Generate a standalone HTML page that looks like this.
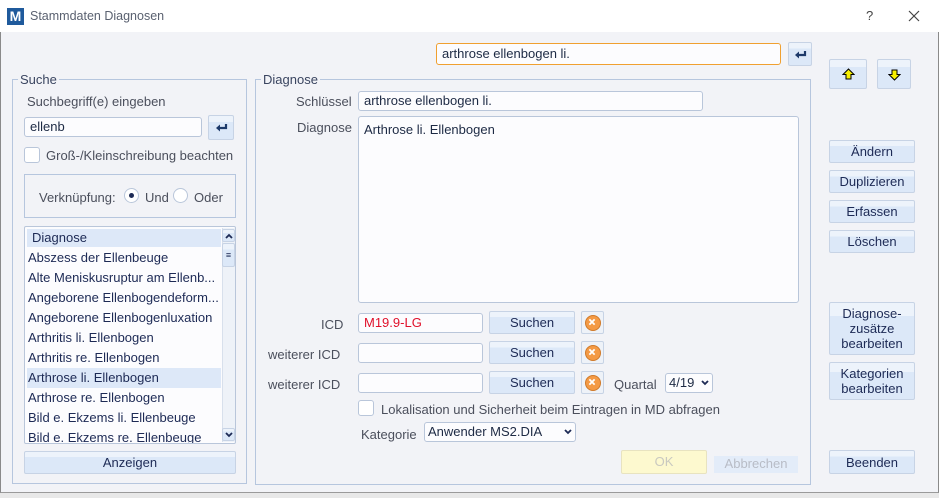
<!DOCTYPE html>
<html><head><meta charset="utf-8"><style>
*{box-sizing:border-box;margin:0;padding:0}
body{width:939px;height:498px;overflow:hidden;background:#fff;font-family:"Liberation Sans","DejaVu Sans",sans-serif;font-size:13px;color:#1d2a44;position:relative}
.a{position:absolute}
#win{left:0;top:0;width:939px;height:493px;background:#f2f3f7;border-left:1px solid #8a8a8a;border-right:1px solid #8a8a8a;border-bottom:1px solid #9a9a9a}
#title{left:0;top:0;width:939px;height:32px;background:#fff}
.grp{border:1px solid #b6c6de}
.leg{background:#f2f3f7;padding:0 2px;color:#3a4560}
.inp{background:#fcfcfe;border:1px solid #b9c6da;border-radius:3px;padding:2px 5px;line-height:14px;white-space:nowrap}
.btn{background:linear-gradient(#edf3fb 0,#edf3fb 25%,#dce8f8 25%);border:1px solid #c7d3e5;border-radius:2px;text-align:center;color:#1d2a55}
.lbl{color:#4b4f5c;white-space:nowrap}
.cb{background:#fff;border:1px solid #b9c6da;border-radius:3px}
.li{left:2px;width:194px;height:20px;line-height:20px;padding-left:1px;color:#1d2a55;white-space:nowrap;overflow:hidden}
.x{width:23px;height:23px;border:1px solid #c7d3e5;border-radius:2px;background:#eef2f8}
.x i{position:absolute;left:3px;top:3px;width:16px;height:16px;border-radius:50%;background:#f49a45;border:1px solid #d07a2a}
</style></head><body>
<div class="a" style="left:0;top:493px;width:939px;height:5px;background:#e8e8e8"></div>
<div id="win" class="a"></div>
<div id="title" class="a"></div>
<div class="a" style="left:7px;top:8px;width:17px;height:17px;background:#1f5a9c;color:#fff;font-weight:bold;font-size:14px;line-height:17px;text-align:center">M</div>
<div class="a" style="left:30px;top:9px;color:#5a6170;font-size:12.5px">Stammdaten Diagnosen</div>
<div class="a" style="left:866px;top:8px;color:#444;font-size:13px">?</div>
<svg class="a" style="left:908px;top:10px" width="12" height="12"><path d="M1 1L11 11M11 1L1 11" stroke="#444" stroke-width="1.2"/></svg>

<svg width="0" height="0" style="position:absolute"><defs><symbol id="ent" viewBox="0 0 14 10"><path d="M11 1V5H4" stroke="#1d3a6a" stroke-width="2.2" fill="none"/><path d="M1 5L5 1.5V8.5Z" fill="#1d3a6a"/></symbol>
<symbol id="xx" viewBox="0 0 16 16"><path d="M5 5L11 11M11 5L5 11" stroke="#fff" stroke-width="2"/></symbol></defs></svg>

<div class="a inp" style="left:436px;top:43px;width:345px;height:22px;border-color:#f0a030;color:#1d2a44;line-height:16px">arthrose ellenbogen li.</div>
<div class="a btn" style="left:788px;top:42px;width:24px;height:24px"><svg class="a" style="left:5px;top:7px" width="14" height="10"><use href="#ent"/></svg></div>

<!-- Suche -->
<div class="a grp" style="left:12px;top:79px;width:235px;height:405px"></div>
<div class="a leg" style="left:18px;top:72px">Suche</div>
<div class="a lbl" style="left:27px;top:94px">Suchbegriff(e) eingeben</div>
<div class="a inp" style="left:24px;top:117px;width:178px;height:20px">ellenb</div>
<div class="a btn" style="left:208px;top:115px;width:26px;height:25px"><svg class="a" style="left:6px;top:7px" width="14" height="10"><use href="#ent"/></svg></div>
<div class="a cb" style="left:24px;top:147px;width:16px;height:16px"></div>
<div class="a lbl" style="left:46px;top:148px">Groß-/Kleinschreibung beachten</div>
<div class="a grp" style="left:24px;top:174px;width:212px;height:44px"></div>
<div class="a lbl" style="left:39px;top:190px">Verknüpfung:</div>
<div class="a" style="left:124px;top:188px;width:15px;height:15px;border:1px solid #b9c6da;border-radius:50%;background:#fff"><div class="a" style="left:4px;top:4px;width:5px;height:5px;border-radius:50%;background:#1d2a55"></div></div>
<div class="a lbl" style="left:145px;top:190px">Und</div>
<div class="a" style="left:173px;top:188px;width:15px;height:15px;border:1px solid #b9c6da;border-radius:50%;background:#fff"></div>
<div class="a lbl" style="left:194px;top:190px">Oder</div>

<div class="a" style="left:24px;top:226px;width:212px;height:218px;background:#fcfcfe;border:1px solid #b9c6da;border-radius:2px;overflow:hidden">
<div class="a" style="left:2px;top:2px;width:194px;height:18px;background:#dde8f8;padding-left:5px;line-height:18px;color:#1d2a55">Diagnose</div>
<div class="a li" style="top:21px">Abszess der Ellenbeuge</div>
<div class="a li" style="top:41px">Alte Meniskusruptur am Ellenb...</div>
<div class="a li" style="top:61px">Angeborene Ellenbogendeform...</div>
<div class="a li" style="top:81px">Angeborene Ellenbogenluxation</div>
<div class="a li" style="top:101px">Arthritis li. Ellenbogen</div>
<div class="a li" style="top:121px">Arthritis re. Ellenbogen</div>
<div class="a li" style="top:141px;background:#dde8f8">Arthrose li. Ellenbogen</div>
<div class="a li" style="top:161px">Arthrose re. Ellenbogen</div>
<div class="a li" style="top:181px">Bild e. Ekzems li. Ellenbeuge</div>
<div class="a li" style="top:201px">Bild e. Ekzems re. Ellenbeuge</div>
<div class="a" style="left:197px;top:1px;width:13px;height:214px;background:#eef2f8;border-left:1px solid #d8e0ec"></div>
<div class="a btn" style="left:197px;top:2px;width:13px;height:13px"><svg class="a" style="left:2px;top:3px" width="8" height="6"><path d="M1 5L4 2L7 5" stroke="#1d2a55" stroke-width="1.8" fill="none"/></svg></div>
<div class="a btn" style="left:197px;top:16px;width:13px;height:24px;font-size:9px;line-height:22px">≡</div>
<div class="a btn" style="left:197px;top:201px;width:13px;height:13px"><svg class="a" style="left:2px;top:3px" width="8" height="6"><path d="M1 1L4 4L7 1" stroke="#1d2a55" stroke-width="1.8" fill="none"/></svg></div>
</div>
<div class="a btn" style="left:24px;top:451px;width:212px;height:23px;line-height:21px">Anzeigen</div>

<!-- Diagnose -->
<div class="a grp" style="left:255px;top:79px;width:556px;height:406px"></div>
<div class="a leg" style="left:261px;top:72px">Diagnose</div>
<div class="a lbl" style="left:296px;top:94px">Schlüssel</div>
<div class="a inp" style="left:358px;top:91px;width:345px;height:20px;color:#1d2a44">arthrose ellenbogen li.</div>
<div class="a lbl" style="left:297px;top:120px">Diagnose</div>
<div class="a inp" style="left:358px;top:116px;width:441px;height:187px;padding-top:6px;color:#1d2a44">Arthrose li. Ellenbogen</div>

<div class="a lbl" style="left:321px;top:317px">ICD</div>
<div class="a inp" style="left:358px;top:313px;width:125px;height:20px;color:#e0102a">M19.9-LG</div>
<div class="a btn" style="left:489px;top:311px;width:86px;height:23px;line-height:22px">Suchen</div>
<div class="a x" style="left:581px;top:311px"><i><svg width="14" height="14" viewBox="1 1 14 14"><use href="#xx"/></svg></i></div>

<div class="a lbl" style="left:268px;top:347px">weiterer ICD</div>
<div class="a inp" style="left:358px;top:343px;width:125px;height:20px"></div>
<div class="a btn" style="left:489px;top:341px;width:86px;height:23px;line-height:22px">Suchen</div>
<div class="a x" style="left:581px;top:341px"><i><svg width="14" height="14" viewBox="1 1 14 14"><use href="#xx"/></svg></i></div>

<div class="a lbl" style="left:268px;top:377px">weiterer ICD</div>
<div class="a inp" style="left:358px;top:373px;width:125px;height:20px"></div>
<div class="a btn" style="left:489px;top:371px;width:86px;height:23px;line-height:22px">Suchen</div>
<div class="a x" style="left:581px;top:371px"><i><svg width="14" height="14" viewBox="1 1 14 14"><use href="#xx"/></svg></i></div>
<div class="a lbl" style="left:614px;top:377px">Quartal</div>
<div class="a inp" style="left:665px;top:373px;width:48px;height:20px;padding:2px 3px;color:#1d2a44">4/19<svg class="a" style="right:3px;top:6px" width="8" height="6"><path d="M1 1L4 4L7 1" stroke="#1d2a55" stroke-width="1.8" fill="none"/></svg></div>

<div class="a cb" style="left:358px;top:400px;width:16px;height:16px"></div>
<div class="a lbl" style="left:381px;top:402px">Lokalisation und Sicherheit beim Eintragen in MD abfragen</div>
<div class="a lbl" style="left:361px;top:427px">Kategorie</div>
<div class="a inp" style="left:424px;top:422px;width:152px;height:20px;padding:2px 3px;color:#1d2a44">Anwender MS2.DIA<svg class="a" style="right:3px;top:6px" width="8" height="6"><path d="M1 1L4 4L7 1" stroke="#1d2a55" stroke-width="1.8" fill="none"/></svg></div>

<div class="a" style="left:621px;top:450px;width:86px;height:24px;background:#fdf9cf;border:1px solid #e8e3c0;border-radius:2px;text-align:center;line-height:22px;color:#c9c9c0">OK</div>
<div class="a" style="left:714px;top:456px;width:84px;height:17px;background:#e3ecf9;text-align:center;line-height:16px;color:#b8bcc6">Abbrechen</div>

<!-- right -->
<div class="a btn" style="left:829px;top:59px;width:38px;height:30px"><svg class="a" style="left:12px;top:8px" width="13" height="12"><path d="M6.5 1L12 6.5H9V11H4V6.5H1Z" fill="#f8f000" stroke="#000" stroke-width="1"/></svg></div>
<div class="a btn" style="left:877px;top:59px;width:34px;height:30px"><svg class="a" style="left:10px;top:9px" width="13" height="12"><path d="M6.5 11L12 5.5H9V1H4V5.5H1Z" fill="#f8f000" stroke="#000" stroke-width="1"/></svg></div>
<div class="a btn" style="left:829px;top:140px;width:86px;height:23px;line-height:22px">Ändern</div>
<div class="a btn" style="left:829px;top:170px;width:86px;height:23px;line-height:22px">Duplizieren</div>
<div class="a btn" style="left:829px;top:200px;width:86px;height:23px;line-height:22px">Erfassen</div>
<div class="a btn" style="left:829px;top:230px;width:86px;height:23px;line-height:22px">Löschen</div>
<div class="a btn" style="left:829px;top:302px;width:86px;height:53px;line-height:15px;padding-top:3px">Diagnose-<br>zusätze<br>bearbeiten</div>
<div class="a btn" style="left:829px;top:362px;width:86px;height:38px;line-height:15px;padding-top:3px">Kategorien<br>bearbeiten</div>
<div class="a btn" style="left:829px;top:450px;width:86px;height:24px;line-height:23px">Beenden</div>
</body></html>
